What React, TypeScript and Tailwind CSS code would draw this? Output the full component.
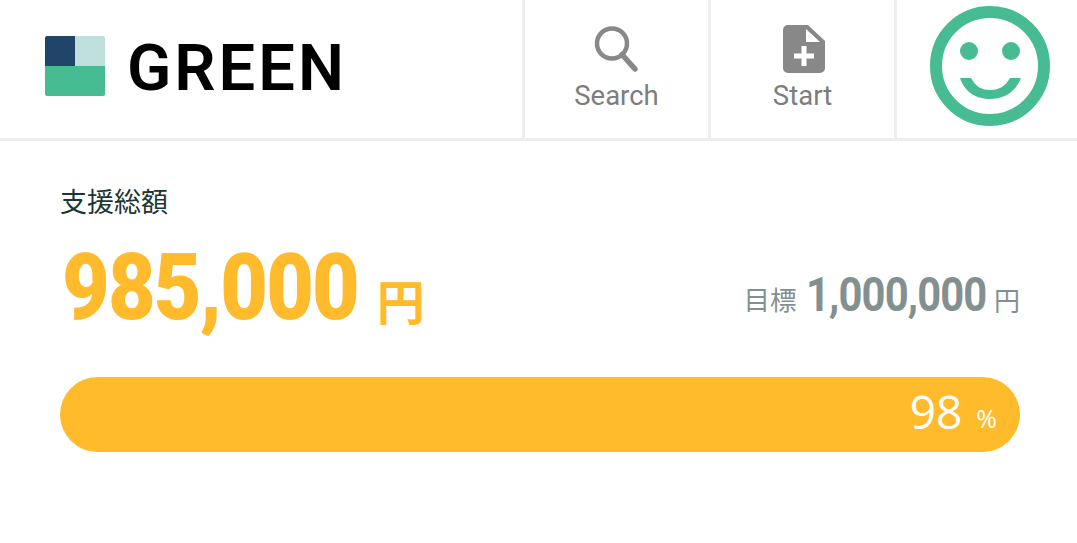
import React from 'react';

const jp = "font-['Noto_Sans_CJK_JP',sans-serif]";

function SearchIcon() {
  return (
    <svg className="-ml-[2px]" width="46" height="48" viewBox="0 0 46 48" fill="none" stroke="#888888">
      <circle cx="19" cy="17.5" r="15" strokeWidth="4.5" />
      <path d="M29 28.5 L42 43" strokeWidth="5.5" strokeLinecap="round" />
    </svg>
  );
}

function FileIcon() {
  return (
    <svg className="ml-[2px] -mt-[3px]" width="42" height="48" viewBox="0 0 42 48">
      <path d="M5 0 H25 L42 16 V43 A5 5 0 0 1 37 48 H5 A5 5 0 0 1 0 43 V5 A5 5 0 0 1 5 0 Z" fill="#888888" />
      <path d="M23 4 V17 H37 Z" fill="#ffffff" />
      <path d="M21 21 V41 M11 31 H31" stroke="#ffffff" strokeWidth="5" />
    </svg>
  );
}

function Smiley() {
  return (
    <svg width="120" height="120" viewBox="0 0 120 120" fill="none">
      <circle cx="60" cy="60" r="54" stroke="#47BB92" strokeWidth="12" />
      <circle cx="39" cy="45" r="9" fill="#47BB92" />
      <circle cx="81" cy="45" r="9" fill="#47BB92" />
      <path d="M30 72 H41 C46 81 52 84 60 84 C68 84 75 81 80 72 H91 C85 87 73 93 60 93 C47 93 35 87 30 72 Z" fill="#47BB92" />
    </svg>
  );
}

function Logo() {
  return (
    <svg width="60" height="60" viewBox="0 0 60 60">
      <path d="M2 0 H30 V30 H0 V2 A2 2 0 0 1 2 0 Z" fill="#214569" />
      <path d="M30 0 H58 A2 2 0 0 1 60 2 V30 H30 Z" fill="#BFDFDD" />
      <path d="M0 30 H60 V58 A2 2 0 0 1 58 60 H2 A2 2 0 0 1 0 58 Z" fill="#47BB92" />
    </svg>
  );
}

function NavItem({ label, children }: { label: string; children: React.ReactNode }) {
  return (
    <div className="w-[186px] border-l-[3px] border-[#eeeeee] flex flex-col items-center pt-[26px]">
      <div className="h-12 flex items-center justify-center">{children}</div>
      <span className="text-[27.5px] leading-[40px] mt-[2px] text-[#7d7d7d] font-['Roboto',sans-serif]">{label}</span>
    </div>
  );
}

export default function App() {
  return (
    <div className="w-[1077px] h-[543px] bg-white overflow-hidden">
      <header className="h-[141px] border-b-[3px] border-[#eeeeee] flex">
        <div className="w-[522px] flex items-center pl-[45px] pb-[6px] gap-[22px]">
          <Logo />
          <span className="mt-[5px] text-[65px] leading-none font-semibold tracking-[3px] text-black font-['Roboto',sans-serif]">GREEN</span>
        </div>
        <NavItem label="Search"><SearchIcon /></NavItem>
        <NavItem label="Start"><FileIcon /></NavItem>
        <div className="flex-1 border-l-[3px] border-[#eeeeee] flex items-center justify-center pl-[6px] pb-[6px]">
          <Smiley />
        </div>
      </header>

      <main className="pl-[60px] pr-[57px] pt-[42px]">
        <div className={`text-[27px] leading-[36px] text-[#1d3535] ${jp}`}>支援総額</div>

        <div className="flex items-end justify-between mt-[15px] h-[100px]">
          <div className="flex items-end">
            <span className="inline-block origin-left scale-x-[0.895] ml-[2px] -mr-[36px] -mb-[4px] text-[92px] leading-[100px] font-black tracking-[-2px] text-[#FFBB2C] font-['Roboto',sans-serif]">985,000</span>
            <span className={`text-[48px] leading-[60px] ml-[20px] mb-[5px] font-bold text-[#FFBB2C] ${jp}`}>円</span>
          </div>
          <div className="flex items-end text-[#84908F] mb-[12px]">
            <span className={`text-[26.5px] leading-[44px] mb-[1px] ${jp}`}>目標</span>
            <span className="inline-block origin-right scale-x-[0.87] text-[48px] leading-[50px] mb-[2px] font-bold tracking-[-1px] -ml-[18px] mr-[8px] font-['Roboto',sans-serif]">1,000,000</span>
            <span className={`text-[26px] leading-[44px] ${jp}`}>円</span>
          </div>
        </div>

        <div className="mt-[43px] h-[75px] rounded-[38px] bg-[#FFBB2C] flex items-center justify-end pr-[23px] text-white font-['Open_Sans',sans-serif]">
          <span className="text-[46px] leading-none mb-[8px]">98</span>
          <span className="text-[25px] leading-none ml-[14px] mt-[7px]">%</span>
        </div>
      </main>
    </div>
  );
}
